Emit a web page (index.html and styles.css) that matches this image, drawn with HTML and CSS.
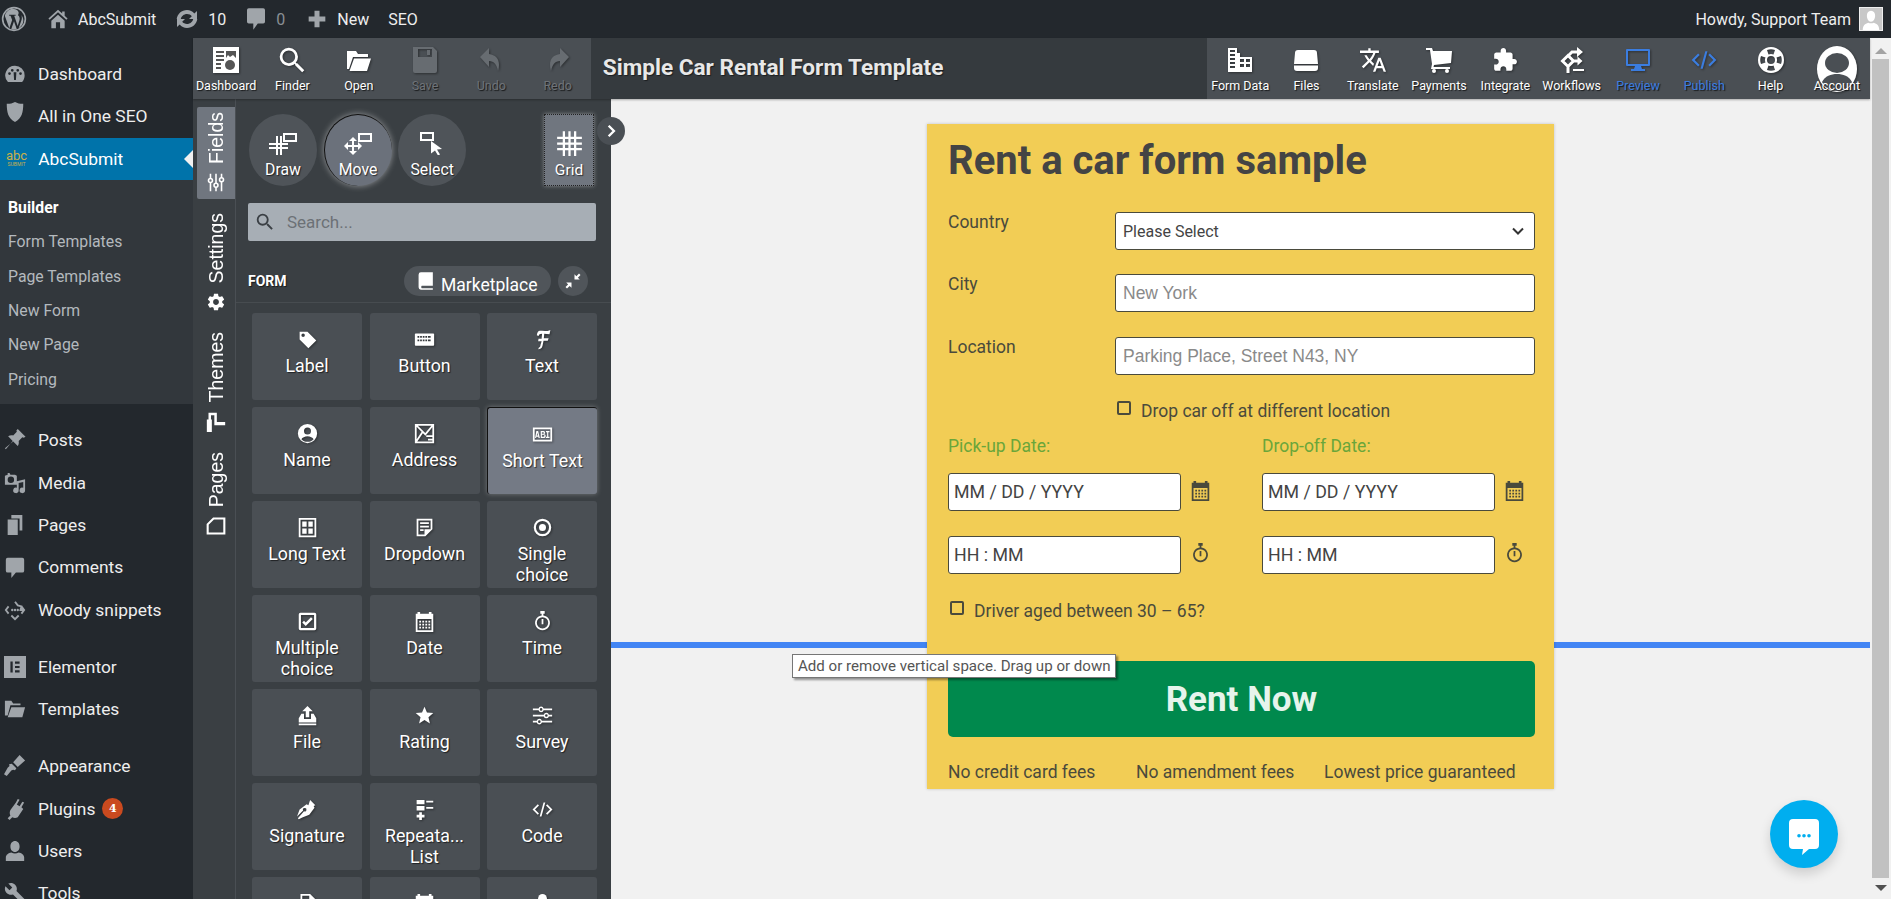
FILE: index.html
```html
<!DOCTYPE html>
<html lang="en">
<head>
    <meta charset="UTF-8">
    <meta name="viewport" content="width=device-width, initial-scale=1.0">
    <title>Simple Car Rental Form Template</title>
    <link rel="stylesheet" href="styles.css">
</head>
<body>
    <svg class="icon-defs" xmlns="http://www.w3.org/2000/svg">
        <symbol id="i-calendar" viewBox="0 0 24 24"><path fill-rule="evenodd" d="M4 1h3v2h10V1h3v2h2v21H2V3h2zM4 9v13h16V9zm2 2h2v2H6zm3.500 0h2v2h-2zm3.500 0h2v2h-2zm3.500 0h2v2h-2zM6 14.500h2v2H6zm3.500 0h2v2h-2zm3.500 0h2v2h-2zm3.500 0h2v2h-2zM6 18h2v2H6zm3.500 0h2v2h-2zm3.500 0h2v2h-2zm3.500 0h2v2h-2z"/></symbol>
        <symbol id="i-watch" viewBox="0 0 24 24"><path fill-rule="evenodd" d="M9.500 0h5v3h-1.500v2.100a8.500 8.500 0 1 1-2 0V3H9.500zM12 7a6.500 6.500 0 1 0 0 13 6.500 6.500 0 0 0 0-13zm-1 2h2v6h-2z"/></symbol>
        <symbol id="i-gear" viewBox="0 0 24 24"><path d="M19.430 12.980c.04-.32.07-.64.07-.98s-.03-.66-.07-.98l2.110-1.650c.19-.15.24-.42.12-.64l-2-3.460c-.12-.22-.39-.3-.61-.22l-2.490 1c-.52-.4-1.080-.73-1.690-.98l-.38-2.650C14.460 2.180 14.250 2 14 2h-4c-.25 0-.46.18-.49.42l-.38 2.650c-.61.25-1.170.59-1.690.98l-2.490-1c-.23-.09-.49 0-.61.22l-2 3.460c-.13.22-.07.49.12.64l2.110 1.650c-.04.32-.07.65-.07.98s.03.66.07.98l-2.110 1.650c-.19.15-.24.42-.12.64l2 3.460c.12.22.39.3.61.22l2.490-1c.52.4 1.080.73 1.690.98l.38 2.650c.03.24.24.42.49.42h4c.25 0 .46-.18.49-.42l.38-2.650c.61-.25 1.170-.59 1.690-.98l2.490 1c.23.09.49 0 .61-.22l2-3.460c.12-.22.07-.49-.12-.64l-2.110-1.650zM12 15.500c-1.930 0-3.500-1.570-3.500-3.500s1.570-3.500 3.500-3.500 3.500 1.570 3.500 3.500-1.570 3.500-3.500 3.500z"/></symbol>
        <symbol id="i-sliders" viewBox="0 0 24 24"><path fill="none" stroke="currentColor" stroke-width="2" d="M5 1v6M5 12v11M12 1v12M12 18v5M19 1v5M19 11v12"/><circle cx="5" cy="9.500" r="2.500" fill="none" stroke="currentColor" stroke-width="2"/><circle cx="12" cy="15.500" r="2.500" fill="none" stroke="currentColor" stroke-width="2"/><circle cx="19" cy="8.500" r="2.500" fill="none" stroke="currentColor" stroke-width="2"/></symbol>
    </svg>

    <header class="adminbar">
        <div class="adminbar-left">
            <svg class="ab-logo" viewBox="0 0 24 24"><circle cx="12" cy="12" r="10.500" fill="none" stroke="currentColor" stroke-width="1.500"/><path fill="currentColor" d="M3.500 9l4.200 11.500 2.600-7.500L8.800 9H7.500V8h6v1h-1.300l3.200 9.500 1.700-5.600c.5-1.700-.1-2.700-.7-3.900h-.6V8c2.300-3.100-2.900-6.300-7-5.100C6 3.700 4.300 6 3.500 9zM18.800 8.200c.7 1.800.5 3.700-.1 5.300l-2.400 7c3.600-2 6.300-7.300 2.500-12.300zM12 14l-2.500 7.300c1.600.5 3.400.4 5-.1z"/></svg>
            <svg class="ab-icon ab-home" viewBox="0 0 24 24"><path fill="currentColor" d="M12 1l5 4.500V3h3v5.200l3.500 3.300-1.500 1.500-10-9-10 9L.5 11.500zM4 14l8-7 8 7v9h-5.500v-7h-5v7H4z"/></svg>
            <span class="ab-text ab-site">AbcSubmit</span>
            <svg class="ab-icon ab-update" viewBox="0 0 24 24"><path fill="currentColor" d="M12 3c3 0 5.600 1.300 7.300 3.500L22 4v8h-8l2.800-2.800C15.700 7.900 14 7 12 7 8.900 7 6.300 9.200 5.800 12H1.700C2.300 6.900 6.700 3 12 3zM2 20v-8h8l-2.800 2.800C8.300 16.100 10 17 12 17c3.100 0 5.700-2.200 6.200-5h4.100c-.6 5.100-5 9-10.300 9-3 0-5.600-1.300-7.300-3.500z"/></svg>
            <span class="ab-text ab-count">10</span>
            <svg class="ab-icon ab-comment" viewBox="0 0 20 24"><path fill="currentColor" d="M2 0h16a2 2 0 0 1 2 2v13a2 2 0 0 1-2 2h-6l-5 7v-7H2a2 2 0 0 1-2-2V2a2 2 0 0 1 2-2z"/></svg>
            <span class="ab-text ab-zero">0</span>
            <svg class="ab-icon ab-plus" viewBox="0 0 24 24"><path fill="currentColor" d="M9 2h6v7h7v6h-7v7H9v-7H2V9h7z"/></svg>
            <span class="ab-text ab-new">New</span>
            <span class="ab-text ab-seo">SEO</span>
        </div>
        <div class="adminbar-right">
            <span class="ab-text">Howdy, Support Team</span>
            <span class="avatar">
                <svg viewBox="0 0 24 24"><path fill="#fff" d="M12 3c3 0 4.500 2.500 4.500 5.500S15 15 12 15s-4.500-3.500-4.500-6.500S9 3 12 3zM3 24c0-5 2.500-7 6-8 1.800 1 4.200 1 6 0 3.500 1 6 3 6 8z"/></svg>
            </span>
        </div>
    </header>

    <div class="main">
        <nav class="sidebar">
            <ul class="menu">
                <li class="menu-item"><svg class="menu-icon" viewBox="0 0 24 24"><path fill="currentColor" fill-rule="evenodd" d="M12 3a10.500 10.500 0 0 1 10.500 10.500c0 2.800-1 5.300-2.800 7.200H4.300a10.500 10.500 0 0 1 7.700-17.700zM11 18.500h2L13.500 10h-3zM6 10a1.500 1.500 0 1 0 0 3 1.500 1.500 0 0 0 0-3zm3-3.500a1.500 1.500 0 1 0 0 3 1.500 1.500 0 0 0 0-3zm6 0a1.500 1.500 0 1 0 0 3 1.500 1.500 0 0 0 0-3zm3 3.500a1.500 1.500 0 1 0 0 3 1.500 1.500 0 0 0 0-3z"/></svg>Dashboard</li>
                <li class="menu-item"><svg class="menu-icon menu-icon-up" viewBox="0 0 24 24"><path fill="currentColor" d="M12 1c3 1.500 6 2.200 9 2 0 9-1.500 16-9 20C4.500 19 3 12 3 3c3 .2 6-.5 9-2z"/></svg>All in One SEO</li>
                <li class="menu-item menu-current"><span class="abc-logo"><span class="abc-word">abc</span><span class="abc-sub">SUBMIT</span></span>AbcSubmit</li>
            </ul>
            <ul class="submenu">
                <li class="submenu-head">Builder</li>
                <li>Form Templates</li>
                <li>Page Templates</li>
                <li>New Form</li>
                <li>New Page</li>
                <li>Pricing</li>
            </ul>
            <ul class="menu menu-gap">
                <li class="menu-item"><svg class="menu-icon" viewBox="0 0 24 24"><path fill="currentColor" d="M15 0l8.500 8.500-2 1-1.500-.5-4 4c.5 2 0 4-1 5.500L9.500 13 2 22l-1-1 9-7.500L4.500 8c1.500-1 3.500-1.500 5.500-1l4-4-.5-1.500z"/></svg>Posts</li>
                <li class="menu-item"><svg class="menu-icon" viewBox="0 0 24 24"><path fill="currentColor" fill-rule="evenodd" d="M4 1h2l1 2h5l2 1v10H1V4l3-1zm3.500 4a3.500 3.500 0 1 0 0 7 3.500 3.500 0 0 0 0-7zM23 8v12a3 3 0 1 1-2-2.800V11l-5 1v8a3 3 0 1 1-2-2.800V10z"/></svg>Media</li>
                <li class="menu-item"><svg class="menu-icon" viewBox="0 0 24 24"><path fill="currentColor" d="M8 1h12v17h-3V5H8zM4 6h11v17H4z"/></svg>Pages</li>
                <li class="menu-item"><svg class="menu-icon" viewBox="0 0 24 24"><path fill="currentColor" d="M4 2h16a2 2 0 0 1 2 2v12a2 2 0 0 1-2 2h-7l-5 6v-6H4a2 2 0 0 1-2-2V4a2 2 0 0 1 2-2z"/></svg>Comments</li>
                <li class="menu-item"><svg class="menu-icon" viewBox="0 0 24 24"><path fill="none" stroke="currentColor" stroke-width="2" d="M12 3l3 4 4 1-1 4 4 0M5 8l-3 4 3 4M19 8l3 4-3 4M8 18l4 4 4-4"/><circle cx="9" cy="12" r="1.300" fill="currentColor"/><circle cx="12" cy="12" r="1.300" fill="currentColor"/><circle cx="15" cy="12" r="1.300" fill="currentColor"/></svg>Woody snippets</li>
            </ul>
            <ul class="menu menu-gap">
                <li class="menu-item"><svg class="menu-icon" viewBox="0 0 24 24"><path fill="currentColor" fill-rule="evenodd" d="M0 0h24v24H0zM7 6v12h2.500V6zm5 0v2.500h5V6zm0 4.800v2.400h5v-2.400zm0 4.700V18h5v-2.500z"/></svg>Elementor</li>
                <li class="menu-item"><svg class="menu-icon" viewBox="0 0 24 24"><path fill="currentColor" d="M1 3h7l2 3h8v2H7l-3 11H1zM8 10h15l-3 11H4z"/></svg>Templates</li>
            </ul>
            <ul class="menu menu-gap">
                <li class="menu-item"><svg class="menu-icon" viewBox="0 0 24 24"><path fill="currentColor" d="M17 0l6 6-8 7-5-5zM8.500 9.500l5 5-1.500 2-2-.5-2 1-5 6-3-2 4-7 2-2-.5-2z"/></svg>Appearance</li>
                <li class="menu-item"><svg class="menu-icon" viewBox="0 0 24 24"><path fill="currentColor" d="M15 1l2 1-3 5 3 2 3-5 2 1-3 5 2 2-6 9c-2 1-4 1-6 0l-3 3-2-2 3-3c-1-2-1-4 0-6l6-8z"/></svg>Plugins<span class="badge">4</span></li>
                <li class="menu-item"><svg class="menu-icon" viewBox="0 0 24 24"><path fill="currentColor" d="M12 1c3 0 5 2.500 5 6s-2 6-5 6-5-2.500-5-6 2-6 5-6zM2 23v-4c0-3 3-5 6-5.500 2.500 1.500 5.500 1.500 8 0 3 .5 6 2.500 6 5.500v4z"/></svg>Users</li>
                <li class="menu-item"><svg class="menu-icon" viewBox="0 0 24 24"><path fill="currentColor" d="M22.700 19l-9.100-9.100c.9-2.300.4-5-1.500-6.900-2-2-5-2.400-7.400-1.300L9 6 6 9 1.600 4.700C.4 7.100.9 10.100 2.900 12.100c1.900 1.900 4.600 2.400 6.900 1.500l9.100 9.100c.4.4 1 .4 1.400 0l2.300-2.300c.5-.4.5-1.100.1-1.400z"/></svg>Tools</li>
            </ul>
        </nav>

        <div class="builder">
            <div class="builder-main">
                <div class="toolbar">
                    <div class="tool-group">
                        <div class="tool"><svg viewBox="0 0 26 26"><path fill="#fff" d="M0 0h26v26H0z"/><path fill="#555" d="M3 4h8v2H3zm0 4h8v2H3zm0 4h8v2H3zm0 4h5v2H3zm0 4h5v2H3zM13 4h10v7l-3-3-3 2-2-2-2 3z"/><circle cx="17" cy="18" r="5" fill="#555"/></svg><span>Dashboard</span></div>
                        <div class="tool"><svg viewBox="2.500 2.500 18.500 18.500"><path fill="#fff" d="M15.500 14h-.79l-.28-.27A6.470 6.470 0 0 0 16 9.500 6.500 6.500 0 1 0 9.500 16c1.610 0 3.090-.59 4.230-1.570l.27.28v.79l5 4.990L20.490 19l-4.990-5zm-6 0C7.010 14 5 11.990 5 9.500S7.010 5 9.500 5 14 7.010 14 9.500 11.990 14 9.500 14z"/></svg><span>Finder</span></div>
                        <div class="tool"><svg viewBox="0 0 26 26"><path fill="#fff" d="M1 4h9l2 3h10v3H7L3 22H1zM8 11.500h17L21 24H3.500z"/></svg><span>Open</span></div>
                        <div class="tool tool-off"><svg viewBox="0 0 26 26"><path fill="#676c71" fill-rule="evenodd" d="M1 0h20l4 4v20a2 2 0 0 1-2 2H3a2 2 0 0 1-2-2zM6 2v8h14V2zm9 1h3v5h-3z"/></svg><span>Save</span></div>
                        <div class="tool tool-off"><svg viewBox="0 0 26 26"><path fill="#676c71" d="M11 1v6c8 1 12 7 9 17-1-6-4-10-9-10v6L2 10z"/></svg><span>Undo</span></div>
                        <div class="tool tool-off"><svg viewBox="0 0 26 26"><path fill="#676c71" d="M15 1v6C7 8 3 14 6 24c1-6 4-10 9-10v6l9-10z"/></svg><span>Redo</span></div>
                    </div>
                    <div class="toolbar-title">Simple Car Rental Form Template</div>
                    <div class="tool-group">
                        <div class="tool"><svg viewBox="0 0 26 26"><path fill="#fff" fill-rule="evenodd" d="M1 1h9v5h3v4h12v15H1zm2 2v2h5V3zm0 4v2h5V7zm0 4v2h5v-2zm0 4v2h5v-2zm0 4v2h5v-2zm10-7v3h4v-3zm6 0v3h4v-3zm-6 5v3h4v-3zm6 0v3h4v-3z"/></svg><span>Form Data</span></div>
                        <div class="tool"><svg viewBox="0 0 26 26"><path fill="#fff" d="M5 3h16a3 3 0 0 1 3 3l1 11H1L2 6a3 3 0 0 1 3-3zM1 18.500h24V21a3 3 0 0 1-3 3H4a3 3 0 0 1-3-3z"/></svg><span>Files</span></div>
                        <div class="tool"><svg viewBox="1 1.500 22 21"><path fill="#fff" d="M12.870 15.070l-2.540-2.510.03-.03c1.740-1.940 2.980-4.170 3.710-6.530H17V4h-7V2H8v2H1v1.990h11.170C11.500 7.920 10.440 9.750 9 11.350 8.070 10.320 7.300 9.190 6.690 8h-2c.73 1.630 1.730 3.170 2.980 4.560l-5.090 5.020L4 19l5-5 3.110 3.110.76-2.040zM18.500 10h-2L12 22h2l1.120-3h4.750L21 22h2l-4.500-12zm-2.620 7l1.620-4.330L19.120 17h-3.240z"/></svg><span>Translate</span></div>
                        <div class="tool"><svg viewBox="0 0 26 26"><path fill="#fff" d="M0 1h6l1 3h19l-1 12-17 2-.5 2H24v2H5l1-5L4 3H0z"/><circle cx="8" cy="24" r="2" fill="#fff"/><circle cx="21" cy="24" r="2" fill="#fff"/></svg><span>Payments</span></div>
                        <div class="tool"><svg viewBox="0 0 24 24"><path fill="#fff" d="M20.500 11H19V7c0-1.100-.9-2-2-2h-4V3.500C13 2.120 11.880 1 10.500 1S8 2.120 8 3.500V5H4c-1.100 0-1.990.9-1.990 2v3.800H3.500c1.490 0 2.700 1.210 2.700 2.700s-1.210 2.700-2.700 2.700H2V20c0 1.100.9 2 2 2h3.800v-1.500c0-1.490 1.210-2.700 2.700-2.700 1.490 0 2.700 1.210 2.700 2.700V22H17c1.100 0 2-.9 2-2v-4h1.500c1.380 0 2.500-1.120 2.500-2.500S21.880 11 20.500 11z"/></svg><span>Integrate</span></div>
                        <div class="tool"><svg viewBox="0 0 26 26"><path fill="none" stroke="#fff" stroke-width="3" d="M9 8.500l5.500 5.500L9 19.500 3.500 14zM10 8l3-3h6M14.500 14H20M9 20v6"/><path fill="#fff" d="M18 0l6 5-6 5zM18.500 9.500l5 4.500-5 4.500zM14 22h11v2H14z"/></svg><span>Workflows</span></div>
                        <div class="tool tool-blue"><svg viewBox="0 0 26 26"><path fill="#3b7de0" fill-rule="evenodd" d="M2 2h22a1 1 0 0 1 1 1v15a1 1 0 0 1-1 1H16l1 3h3v2H6v-2h3l1-3H2a1 1 0 0 1-1-1V3a1 1 0 0 1 1-1zm1 2v13h20V4z"/></svg><span>Preview</span></div>
                        <div class="tool tool-blue"><svg viewBox="0 0 24 24"><path fill="#3b7de0" d="M8 7.400L3.400 12 8 16.600 6.600 18l-6-6 6-6zm8 9.200l4.600-4.600L16 7.400 17.400 6l6 6-6 6zM13.200 4h2L10.800 20h-2z"/></svg><span>Publish</span></div>
                        <div class="tool"><svg viewBox="0 0 26 26"><path fill="#fff" fill-rule="evenodd" d="M13 0a13 13 0 1 1 0 26 13 13 0 0 1 0-26zM9 3l1.500 4.500a6 6 0 0 1 5 0L17 3a11 11 0 0 0-8 0zM3 9a11 11 0 0 0 0 8l4.500-1.500a6 6 0 0 1 0-5zm20 0l-4.500 1.500a6 6 0 0 1 0 5L23 17a11 11 0 0 0 0-8zM10.500 18.500L9 23a11 11 0 0 0 8 0l-1.500-4.500a6 6 0 0 1-5 0zM13 9a4 4 0 1 0 0 8 4 4 0 0 0 0-8z"/></svg><span>Help</span></div>
                        <div class="tool tool-account"><svg viewBox="0 0 40 46"><ellipse cx="20" cy="23" rx="20" ry="23" fill="#fff"/><ellipse cx="20" cy="17" rx="12" ry="10" fill="#4a4f54"/><path fill="#4a4f54" d="M5 36c3-6 9-8 15-8s12 2 15 8c-3 6-9 9-15 9S8 42 5 36z"/></svg><span>Account</span></div>
                    </div>
                </div>

                <div class="workspace">
                    <aside class="panel">
                        <div class="panel-tabs">
                            <div class="panel-tab panel-tab-active"><span>Fields</span><svg><use href="#i-sliders"/></svg></div>
                            <div class="panel-tab"><span>Settings</span><svg><use href="#i-gear"/></svg></div>
                            <div class="panel-tab"><span>Themes</span><svg viewBox="0 0 24 24"><path fill="currentColor" d="M1 9h6v15H1zM3 1h9v3H6v5H3zM10 1h3v11h-3zM10 12h13v4H10z"/></svg></div>
                            <div class="panel-tab"><span>Pages</span><svg viewBox="0 0 24 24"><path fill="none" stroke="currentColor" stroke-width="2.500" d="M9 3h13v18H2V10z"/></svg></div>
                        </div>
                        <div class="panel-body">
                            <div class="mode-row">
                                <div class="mode-btn"><svg viewBox="0 0 30 24"><path fill="none" stroke="#fff" stroke-width="2" d="M16 3h12v7H16zM9 5v19M13 5v19M1 13h19M1 17h19"/></svg><span>Draw</span></div>
                                <div class="mode-btn mode-btn-on"><svg viewBox="0 0 30 24"><path fill="none" stroke="#fff" stroke-width="2" d="M16 3h12v7H16z"/><path fill="#fff" d="M10 6l4 4h-3v4h4v-3l4 4-4 4v-3h-4v4h3l-4 4-4-4h3v-4H5v3l-4-4 4-4v3h4v-4H6z"/></svg><span>Move</span></div>
                                <div class="mode-btn"><svg viewBox="0 0 30 24"><path fill="none" stroke="#fff" stroke-width="2" d="M4 2h12v7H4z"/><path fill="#fff" d="M14 10l11 8-5 .5 3 5-2 1-3-5-4 3z"/></svg><span>Select</span></div>
                                <div class="grid-btn"><svg viewBox="0 0 24 24"><path fill="none" stroke="#fff" stroke-width="2" d="M7 1v22M12 1v22M17 1v22M1 7h22M1 12h22M1 17h22"/></svg><span>Grid</span></div>
                            </div>
                            <div class="search-box">
                                <svg viewBox="0 0 24 24"><path fill="#3a3f44" d="M15.500 14h-.79l-.28-.27A6.470 6.470 0 0 0 16 9.500 6.500 6.500 0 1 0 9.500 16c1.610 0 3.090-.59 4.230-1.570l.27.28v.79l5 4.990L20.490 19l-4.990-5zm-6 0C7.010 14 5 11.990 5 9.500S7.010 5 9.500 5 14 7.010 14 9.500 11.990 14 9.500 14z"/></svg>
                                <input type="text" placeholder="Search...">
                            </div>
                            <div class="form-head">
                                <span class="form-head-title">FORM</span>
                                <div class="marketplace"><svg viewBox="0 0 24 24"><path fill="#fff" d="M5 1h15v17H6a2 2 0 0 0 0 3h14v2H5a3 3 0 0 1-3-3V4a3 3 0 0 1 3-3z"/></svg><span>Marketplace</span></div>
                                <div class="collapse-btn"><svg viewBox="0 0 24 24"><path fill="#fff" d="M14 3v7h7l-2.500-2.500L22 4l-2-2-3.500 3.500zM10 21v-7H3l2.500 2.500L2 20l2 2 3.500-3.500z"/></svg></div>
                            </div>
                            <div class="tiles">
                                <div class="tile"><svg viewBox="0 0 24 24"><path d="M3 3h9l10 10-9 9L3 12zm4 2a2 2 0 1 0 0 4 2 2 0 0 0 0-4z" fill-rule="evenodd"/></svg><span>Label</span></div>
                                <div class="tile"><svg viewBox="0 0 24 24"><path fill-rule="evenodd" d="M2 5h20a1 1 0 0 1 1 1v12a1 1 0 0 1-1 1H2a1 1 0 0 1-1-1V6a1 1 0 0 1 1-1zm2 3v2h2V8zm3 0v2h2V8zm3 0v2h2V8zm3 0v2h2V8zm3 0v2h3V8zM4 12v2h2v-2zm3 0v2h2v-2zm3 0v2h2v-2zm3 0v2h2v-2zm3 0v2h3v-2z"/></svg><span>Button</span></div>
                                <div class="tile"><svg viewBox="0 0 24 24"><path d="M9 2c3 0 8 1 12-1l-1 5c-2 0-4-.5-6-.5l-.5 5H19l-1 3h-4.800L12 19c-.5 3-3 4-5 4l1-2c1 0 1.500-1 1.800-3L11 14H7l.5-3H11l.5-5.500C9 5.500 8 6.500 7.500 8L5.500 7C6 4 7 2 9 2z"/></svg><span>Text</span></div>
                                <div class="tile"><svg viewBox="0 0 24 24"><path fill-rule="evenodd" d="M12 1a11 11 0 1 1 0 22 11 11 0 0 1 0-22zm0 4a4 4 0 1 0 0 8 4 4 0 0 0 0-8zM5 18.500c1.500 1.800 4 3 7 3s5.500-1.200 7-3c-1-2-4-3.500-7-3.500s-6 1.500-7 3.500z"/></svg><span>Name</span></div>
                                <div class="tile"><svg viewBox="0 0 24 24"><path fill="none" stroke="#fff" stroke-width="2" d="M2 2h20v20H2zM2 2l11 11 9-11M2 22l8-12M14 15h8M16 19h6"/></svg><span>Address</span></div>
                                <div class="tile tile-on"><svg viewBox="0 0 24 24"><path fill-rule="evenodd" d="M1 4h22v16H1zm2 2v12h18V6zm2 2h2l2 8H7.500l-.3-1.500H5L4.700 16H3.500zm1.100 2l-.7 3h1.500zM10 8h3a2 2 0 0 1 1 3.700A2 2 0 0 1 13 16h-3zm1.300 1.300V11h1.500a.8.8 0 0 0 0-1.700zm0 3v2.400h1.700a1.200 1.200 0 0 0 0-2.400zM16 8h4v1.300h-1.400v5.400H20V16h-4v-1.300h1.300V9.300H16z"/></svg><span>Short Text</span></div>
                                <div class="tile"><svg viewBox="0 0 24 24"><path fill-rule="evenodd" d="M2 1h20v22H2zm2 2v18h16V3zm2 2h5v6H6zm7 0h5v6h-5zM6 13h5v6H6zm7 0h5v6h-5z"/></svg><span>Long Text</span></div>
                                <div class="tile"><svg viewBox="0 0 24 24"><path fill-rule="evenodd" d="M3 2h18v12l-8 8H3zm2 2v16h7v-6h7V4zm2 2h10v2H7zm0 4h10v2H7zm0 4h4v2H7z"/></svg><span>Dropdown</span></div>
                                <div class="tile"><svg viewBox="0 0 24 24"><path fill-rule="evenodd" d="M12 2a10 10 0 1 1 0 20 10 10 0 0 1 0-20zm0 2.500a7.500 7.500 0 1 0 0 15 7.500 7.500 0 0 0 0-15zM12 8a4 4 0 1 1 0 8 4 4 0 0 1 0-8z"/></svg><span>Single<br>choice</span></div>
                                <div class="tile"><svg viewBox="0 0 24 24"><path fill-rule="evenodd" d="M4 2h16a2 2 0 0 1 2 2v16a2 2 0 0 1-2 2H4a2 2 0 0 1-2-2V4a2 2 0 0 1 2-2zm.5 2.500v15h15v-15zM10 13l6-6 2 2-8 8-4-4 2-2z"/></svg><span>Multiple<br>choice</span></div>
                                <div class="tile"><svg><use href="#i-calendar"/></svg><span>Date</span></div>
                                <div class="tile"><svg><use href="#i-watch"/></svg><span>Time</span></div>
                                <div class="tile"><svg viewBox="0 0 24 24"><path d="M12 1l6 6h-4v7h-4V7H6zM2 15l3-5h3v6h8v-6h3l3 5v5H2zM2 21h20v2H2z"/></svg><span>File</span></div>
                                <div class="tile"><svg viewBox="0 0 24 24"><path d="M12 17.270L18.180 21l-1.640-7.030L22 9.240l-7.190-.61L12 2 9.190 8.630 2 9.240l5.460 4.730L5.820 21z"/></svg><span>Rating</span></div>
                                <div class="tile"><svg viewBox="0 0 24 24"><path fill-rule="evenodd" d="M1 4h6.500a3 3 0 0 1 5.800 0H23v2H13.300a3 3 0 0 1-5.800 0H1zm9.400-.5a1.500 1.500 0 1 0 0 3 1.500 1.500 0 0 0 0-3zM1 11h12.500a3 3 0 0 1 5.800 0H23v2h-3.700a3 3 0 0 1-5.800 0H1zm15.400-.5a1.500 1.500 0 1 0 0 3 1.500 1.500 0 0 0 0-3zM1 18h4.500a3 3 0 0 1 5.800 0H23v2H11.300a3 3 0 0 1-5.800 0H1zm7.400-.5a1.500 1.500 0 1 0 0 3 1.500 1.500 0 0 0 0-3z"/></svg><span>Survey</span></div>
                                <div class="tile"><svg viewBox="0 0 24 24"><path fill-rule="evenodd" d="M15 1l6 6-2 1 1 2-6 8-8 3-4 2-1-1 7-8a2 2 0 1 0-1-1l-7 7 3-8 8-6 2 1z"/></svg><span>Signature</span></div>
                                <div class="tile"><svg viewBox="0 0 24 24"><path d="M3 1h9v5H3zm11 1h8v2h-8zM3 8h9v5H3zm11 1h8v2h-8zM6 15h3v3h3v3H9v3H6v-3H3v-3h3z"/></svg><span>Repeata...<br>List</span></div>
                                <div class="tile"><svg viewBox="0 0 24 24"><path d="M8 7.400L3.400 12 8 16.600 6.600 18l-6-6 6-6zm8 9.200l4.600-4.600L16 7.400 17.400 6l6 6-6 6zM13.200 4h2L10.800 20h-2z"/></svg><span>Code</span></div>
                                <div class="tile"><svg viewBox="0 0 24 24"><path fill-rule="evenodd" d="M4 1h11l6 6v16H4zm2 2v18h13V8h-5V3z"/></svg></div>
                                <div class="tile"><svg><use href="#i-calendar"/></svg></div>
                                <div class="tile"><svg viewBox="0 0 24 24"><circle cx="12" cy="6" r="5"/><path d="M3 23c0-6 4-10 9-10s9 4 9 10z"/></svg></div>
                            </div>
                        </div>
                    </aside>

                    <section class="canvas">
                        <div class="guide-line"></div>
                        <form class="card">
                            <h1>Rent a car form sample</h1>
                            <div class="form-row">
                                <label for="country">Country</label>
                                <div class="select-wrap">
                                    <select id="country" class="field"><option>Please Select</option></select>
                                    <svg viewBox="0 0 12 8"><path fill="none" stroke="#333" stroke-width="2" d="M1 1.500l5 5 5-5"/></svg>
                                </div>
                            </div>
                            <div class="form-row form-row-city">
                                <label for="city">City</label>
                                <input id="city" class="field" type="text" placeholder="New York">
                            </div>
                            <div class="form-row">
                                <label for="location">Location</label>
                                <input id="location" class="field" type="text" placeholder="Parking Place, Street N43, NY">
                            </div>
                            <div class="check-row check-row-indent"><span class="check-box"></span>Drop car off at different location</div>

                            <div class="date-grid">
                                <div class="date-col">
                                    <div class="date-title">Pick-up Date:</div>
                                    <div class="date-line"><input class="field field-date" type="text" placeholder="MM / DD / YYYY"><svg><use href="#i-calendar"/></svg></div>
                                    <div class="date-line"><input class="field field-date" type="text" placeholder="HH : MM"><svg><use href="#i-watch"/></svg></div>
                                </div>
                                <div class="date-col">
                                    <div class="date-title">Drop-off Date:</div>
                                    <div class="date-line"><input class="field field-date" type="text" placeholder="MM / DD / YYYY"><svg><use href="#i-calendar"/></svg></div>
                                    <div class="date-line"><input class="field field-date" type="text" placeholder="HH : MM"><svg><use href="#i-watch"/></svg></div>
                                </div>
                            </div>
                            <div class="check-row"><span class="check-box"></span>Driver aged between 30 – 65?</div>

                            <button type="button" class="rent-btn">Rent Now</button>
                            <div class="card-notes">
                                <span>No credit card fees</span>
                                <span>No amendment fees</span>
                                <span>Lowest price guaranteed</span>
                            </div>
                        </form>
                        <div class="tooltip">Add or remove vertical space. Drag up or down</div>
                        <div class="chat-btn">
                            <svg viewBox="0 0 30 36"><path fill="#fff" fill-rule="evenodd" d="M4 0h22a4 4 0 0 1 4 4v22a4 4 0 0 1-4 4h-6l-7 6 1-6H4a4 4 0 0 1-4-4V4a4 4 0 0 1 4-4zm6 15a1.800 1.800 0 1 0 0 3.600 1.800 1.800 0 0 0 0-3.600zm5 0a1.800 1.800 0 1 0 0 3.600 1.800 1.800 0 0 0 0-3.600zm5 0a1.800 1.800 0 1 0 0 3.600 1.800 1.800 0 0 0 0-3.600z"/></svg>
                        </div>
                    </section>
                    <div class="panel-handle"><svg viewBox="0 0 24 24"><path fill="none" stroke="#fff" stroke-width="4" d="M8 3l9 9-9 9"/></svg></div>
                </div>
            </div>
            <div class="scrollbar">
                <span class="scroll-up"></span>
                <span class="scroll-thumb"></span>
                <span class="scroll-down"></span>
            </div>
        </div>
    </div>
</body>
</html>
```

FILE: styles.css
```css
* {
    box-sizing: border-box;
}

html, body {
    height: 100%;
}

body {
    margin: 0;
    display: flex;
    flex-direction: column;
    overflow: hidden;
    font-family: Roboto, "Liberation Sans", sans-serif;
    background-color: #f1f1f1;
    color: #444;
}

.icon-defs {
    display: none;
}

/* admin bar */
.adminbar {
    flex: 0 0 38px;
    display: flex;
    justify-content: space-between;
    align-items: center;
    background-color: #23282d;
    color: #a0a5aa;
}

.adminbar-left {
    display: flex;
    align-items: center;
}

.adminbar-right {
    display: flex;
    align-items: center;
    padding-right: 8px;
}

.ab-text {
    font-size: 16px;
    color: #eee;
}

.ab-logo {
    width: 26px;
    height: 26px;
    margin-left: 1px;
}

.ab-icon {
    width: 20px;
    height: 20px;
}

.ab-home { margin-left: 21px; }
.ab-site { margin-left: 10px; }
.ab-update { width: 24px; height: 24px; margin-left: 19px; }
.ab-count { margin-left: 9px; }
.ab-comment { width: 18px; height: 22px; margin-left: 21px; }
.ab-zero { margin-left: 11px; color: #8a8f94; }
.ab-plus { margin-left: 22px; }
.ab-new { margin-left: 10px; }
.ab-seo { margin-left: 19px; }

.avatar {
    width: 24px;
    height: 24px;
    margin-left: 8px;
    background-color: #c8c8c8;
    border: 1px solid #eee;
    display: flex;
}

.avatar svg {
    width: 100%;
    height: 100%;
}

.main {
    flex: 1;
    display: flex;
    min-height: 0;
}

/* wp sidebar */
.sidebar {
    flex: 0 0 193px;
    background-color: #23282d;
    padding-top: 15px;
    overflow: hidden;
}

.menu, .submenu {
    list-style: none;
    margin: 0;
    padding: 0;
}

.menu-gap {
    margin-top: 15px;
}

.menu-item {
    position: relative;
    display: flex;
    align-items: center;
    height: 42.3px;
    font-size: 17.400px;
    color: #eee;
}

.menu-icon {
    flex: 0 0 22px;
    width: 22px;
    height: 22px;
    margin: 0 12px 0 4px;
    color: #a0a5aa;
}

.menu-icon-up {
    margin-top: -8px;
}

.menu-current {
    background-color: #0073aa;
    color: #fff;
}

.menu-current::after {
    content: "";
    position: absolute;
    right: 0;
    top: 12px;
    border: 9px solid transparent;
    border-right-color: #f1f1f1;
    border-left-width: 0;
}

.abc-logo {
    flex: 0 0 20px;
    margin: 0 11px 0 6px;
    display: flex;
    flex-direction: column;
    align-items: center;
    line-height: 1;
    color: #c9b04a;
}

.abc-word {
    font-size: 13px;
    line-height: 10px;
}

.abc-sub {
    font-size: 5px;
    line-height: 6px;
}

.submenu {
    background-color: #32373c;
    padding: 11px 0 7px;
}

.submenu li {
    height: 34.400px;
    line-height: 34.400px;
    padding-left: 8px;
    font-size: 15.800px;
    color: #b4b9be;
}

.submenu .submenu-head {
    color: #fff;
    font-weight: 700;
}

.badge {
    width: 21px;
    height: 21px;
    margin-left: 7px;
    border-radius: 50%;
    background-color: #ca4a1f;
    color: #fff;
    font-family: "DejaVu Serif", serif;
    font-size: 11px;
    font-weight: 700;
    line-height: 21px;
    text-align: center;
}

/* builder */
.builder {
    flex: 1;
    display: flex;
    min-width: 0;
}

.builder-main {
    flex: 1;
    display: flex;
    flex-direction: column;
    min-width: 0;
}

.toolbar {
    flex: 0 0 61px;
    display: flex;
    background-color: #353a3e;
    box-shadow: 0 1px 2px rgba(0, 0, 0, 0.3);
    position: relative;
    z-index: 2;
}

.tool-group {
    display: flex;
    background-color: #4a4f54;
}

.toolbar-title {
    flex: 1;
    padding-left: 12px;
    line-height: 60px;
    font-size: 22.600px;
    font-weight: 700;
    color: #e8e8e8;
    text-shadow: 1px 1px 1px rgba(0, 0, 0, 0.5);
}

.tool {
    width: 66.300px;
    display: flex;
    flex-direction: column;
    align-items: center;
    padding-top: 9px;
    color: #fff;
}

.tool svg {
    width: 26px;
    height: 26px;
    filter: drop-shadow(1px 1px 1px rgba(0, 0, 0, 0.4));
}

.tool span {
    margin-top: 5px;
    font-size: 12.500px;
    line-height: 16px;
    white-space: nowrap;
    text-shadow: 1px 1px 1px rgba(0, 0, 0, 0.7);
}

.tool-off {
    color: #6f7378;
}

.tool-blue {
    color: #3b7de0;
}

.tool-account svg {
    width: 40px;
    height: 46px;
    margin-top: -1px;
    margin-bottom: -19px;
}

.tool-account span {
    position: relative;
}

.workspace {
    flex: 1;
    display: flex;
    position: relative;
    min-height: 0;
}

/* left panel */
.panel {
    flex: 0 0 418px;
    display: flex;
    background-color: #3a3f43;
    color: #fff;
    overflow: hidden;
}

.panel-tabs {
    flex: 0 0 43px;
    display: flex;
    flex-direction: column;
    align-items: flex-end;
    gap: 9px;
    padding-top: 8px;
    border-right: 1px solid #4a4f54;
}

.panel-tab {
    width: 38px;
    display: flex;
    flex-direction: column;
    align-items: center;
    gap: 9px;
    padding: 4px 0 7px;
    color: #fff;
}

.panel-tab-active {
    height: 92px;
    margin-bottom: 1px;
    padding-top: 5px;
    background-color: #70767f;
    border-radius: 2px 0 0 2px;
}

.panel-tab span {
    writing-mode: vertical-rl;
    transform: rotate(180deg);
    font-family: "Liberation Sans", sans-serif;
    font-size: 19.500px;
    line-height: 20px;
}

.panel-tab svg {
    width: 20px;
    height: 20px;
    fill: currentColor;
}

.panel-body {
    flex: 1;
    min-width: 0;
    padding-top: 15px;
}

.mode-row {
    display: flex;
    gap: 6.600px;
    height: 72px;
    margin: 0 17px 0 13px;
}

.mode-btn {
    width: 68px;
    height: 72px;
    padding-top: 9px;
    border-radius: 50%;
    background-color: #4f5459;
    display: flex;
    flex-direction: column;
    align-items: center;
    justify-content: center;
    font-size: 15.800px;
    text-shadow: 1px 1px 1px rgba(0, 0, 0, 0.6);
}

.mode-btn svg {
    width: 30px;
    height: 24px;
    margin-bottom: 5px;
}

.mode-btn-on {
    background-color: #6b717b;
    border-top: 1px solid #111;
    border-left: 1px solid #111;
    box-shadow: 0 0 6px rgba(255, 255, 255, 0.45);
}

.grid-btn {
    width: 50px;
    margin-left: auto;
    padding-top: 8px;
    background-color: #70767f;
    border: 1px dotted #222;
    box-shadow: 0 0 4px rgba(255, 255, 255, 0.4);
    display: flex;
    flex-direction: column;
    align-items: center;
    justify-content: center;
    font-size: 15.500px;
    text-shadow: 1px 1px 1px rgba(0, 0, 0, 0.6);
}

.grid-btn svg {
    width: 27px;
    height: 27px;
    margin-bottom: 4px;
}

.search-box {
    display: flex;
    align-items: center;
    height: 38px;
    margin: 17px 15px 0 12px;
    padding-left: 6px;
    border-radius: 2px;
    background-color: #a7aeb5;
}

.search-box svg {
    flex: 0 0 22px;
    width: 22px;
    height: 22px;
}

.search-box input {
    flex: 1;
    min-width: 0;
    margin-left: 9px;
    border: 0;
    background: none;
    font-family: inherit;
    font-size: 17px;
}

.search-box input::placeholder {
    color: #6c7176;
}

.form-head {
    display: flex;
    align-items: center;
    gap: 7px;
    height: 37px;
    margin-top: 25px;
    padding: 0 23px 7px 12px;
    border-bottom: 1px solid #474c50;
}

.form-head-title {
    margin-right: auto;
    font-size: 14px;
    font-weight: 700;
    text-shadow: 1px 1px 1px rgba(0, 0, 0, 0.6);
}

.marketplace {
    display: flex;
    align-items: center;
    gap: 5px;
    width: 147px;
    height: 30px;
    padding-left: 13px;
    border-radius: 15px;
    background-color: #50555a;
    font-size: 17.500px;
    white-space: nowrap;
}

.marketplace svg {
    width: 19px;
    height: 20px;
}

.marketplace span {
    padding-top: 8px;
}

.collapse-btn {
    width: 30px;
    height: 30px;
    padding: 6px;
    border-radius: 50%;
    background-color: #50555a;
}

.collapse-btn svg {
    display: block;
    width: 100%;
    height: 100%;
}

.tiles {
    display: grid;
    grid-template-columns: repeat(3, 110px);
    grid-auto-rows: 87px;
    gap: 7px 7.500px;
    margin: 10px 0 0 16px;
}

.tile {
    display: flex;
    flex-direction: column;
    align-items: center;
    padding-top: 16px;
    border-radius: 3px;
    background-color: #4a4f54;
    font-size: 17.800px;
    line-height: 21px;
    text-align: center;
    text-shadow: 1px 1px 1px rgba(0, 0, 0, 0.6);
}

.tile svg {
    flex: 0 0 21px;
    width: 21px;
    height: 21px;
    margin-bottom: 5px;
    fill: #fff;
    filter: drop-shadow(1px 1px 1px rgba(0, 0, 0, 0.4));
}

.tile-on {
    background-color: #747a85;
    border-top: 1px solid #111;
    border-left: 1px solid #111;
    box-shadow: 0 0 5px rgba(255, 255, 255, 0.3);
}

.panel-handle {
    position: absolute;
    left: 404px;
    top: 18px;
    width: 28px;
    height: 28px;
    padding: 7px;
    border-radius: 50%;
    background-color: #4a4f54;
}

.panel-handle svg {
    display: block;
    width: 100%;
    height: 100%;
}

/* canvas */
.canvas {
    flex: 1;
    min-width: 0;
    position: relative;
    padding-top: 25px;
    background-color: #f1f1f1;
}

.guide-line {
    position: absolute;
    left: 0;
    right: 0;
    top: 543px;
    height: 6px;
    background-color: #4285f4;
}

.card {
    position: relative;
    width: 627px;
    height: 665px;
    margin: 0 auto;
    padding: 14px 19px 0 21px;
    background-color: #f2cd55;
    box-shadow: 0 0 3px rgba(0, 0, 0, 0.2);
    font-size: 17.500px;
    color: #4a4a3c;
}

.card h1 {
    margin: 0 0 28px;
    font-size: 40px;
    font-weight: 700;
    line-height: 46px;
    color: #444;
}

.form-row {
    display: grid;
    grid-template-columns: 167px 420px;
    margin-bottom: 24px;
}

.form-row-city {
    margin-bottom: 25px;
}

.form-row label {
    line-height: 21px;
}

.field {
    height: 38px;
    padding: 0 7px;
    border: 1px solid #4a4a3c;
    border-radius: 3px;
    background-color: #fff;
    font-family: "Liberation Sans", sans-serif;
    font-size: 17.500px;
    color: #444;
}

.select-wrap {
    position: relative;
    display: flex;
}

.select-wrap svg {
    position: absolute;
    right: 11px;
    top: 15px;
    width: 12px;
    height: 8px;
    pointer-events: none;
}

select.field {
    width: 100%;
    appearance: none;
    font-family: Roboto, sans-serif;
    font-size: 16px;
}

.field::placeholder {
    color: #8a8a8a;
}

.check-row {
    display: flex;
    align-items: center;
    height: 24px;
    padding-left: 2px;
}

.check-row-indent {
    padding-left: 169px;
}

.check-box {
    width: 14px;
    height: 14px;
    margin: -7px 10px 0 0;
    border: 2px solid #4a4a3c;
    border-radius: 2px;
}

.date-grid {
    display: grid;
    grid-template-columns: 314px 273px;
    margin-top: 12px;
}

.date-title {
    margin-bottom: 16px;
    line-height: 22px;
    color: #6aa63a;
}

.date-line {
    display: flex;
    align-items: center;
    margin-bottom: 25px;
}

.field-date {
    width: 233px;
    height: 38px;
    padding: 0 4px 2px 5px;
    font-family: Roboto, sans-serif;
    font-size: 17.800px;
}

.field-date::placeholder {
    color: #444;
}

.date-line svg {
    width: 21px;
    height: 21px;
    margin: -3px 0 0 9px;
    fill: #4a4a3c;
}

.rent-btn {
    display: block;
    width: 587px;
    height: 76px;
    margin-top: 38px;
    border: 0;
    border-radius: 5px;
    background-color: #00894d;
    font-family: inherit;
    font-size: 35px;
    font-weight: 700;
    color: #e6f4ec;
}

.card-notes {
    display: grid;
    grid-template-columns: 188px 188px auto;
    margin-top: 24px;
    line-height: 22px;
}

.tooltip {
    position: absolute;
    left: 181px;
    top: 555px;
    width: 324px;
    height: 24px;
    padding-left: 5px;
    border: 1px solid #767676;
    background-color: #fff;
    box-shadow: 2px 2px 2px rgba(0, 0, 0, 0.4);
    font-size: 15.100px;
    line-height: 22px;
    white-space: nowrap;
    color: #555;
}

.chat-btn {
    position: absolute;
    right: 32px;
    top: 701px;
    width: 68px;
    height: 68px;
    padding: 19px 19px 13px;
    border-radius: 50%;
    background-color: #00aeef;
    box-shadow: 0 6px 12px rgba(0, 0, 0, 0.15);
}

.chat-btn svg {
    display: block;
    width: 30px;
    height: 36px;
}

/* page scrollbar */
.scrollbar {
    flex: 0 0 21px;
    display: flex;
    flex-direction: column;
    align-items: center;
    background-color: #f1f1f1;
}

.scroll-up {
    margin-top: 10px;
    border: 6px solid transparent;
    border-bottom: 6px solid #a3a3a3;
    border-top: 0;
}

.scroll-thumb {
    width: 17px;
    height: 819px;
    margin-top: 5px;
    background-color: #c1c1c1;
}

.scroll-down {
    margin-top: 7px;
    border: 6px solid transparent;
    border-top: 6px solid #505050;
    border-bottom: 0;
}
```
